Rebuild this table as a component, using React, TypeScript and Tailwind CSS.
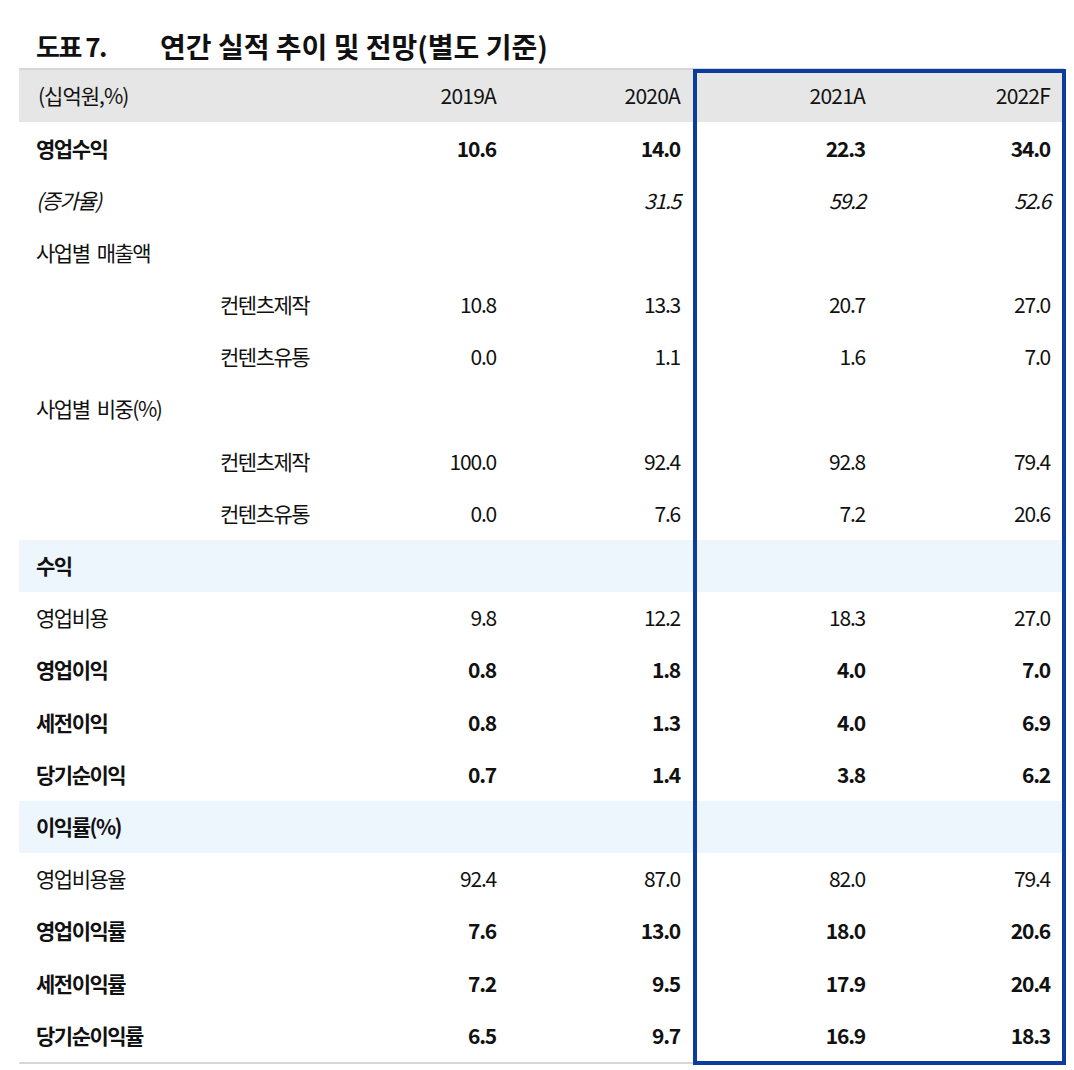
type Kind = "bold" | "normal" | "italic" | "sub" | "section";

type Row = { label: string; kind: Kind; values?: string[] };

const years = ["2019A", "2020A", "2021A", "2022F"];

const rows: Row[] = [
  { label: "영업수익", kind: "bold", values: ["10.6", "14.0", "22.3", "34.0"] },
  { label: "(증가율)", kind: "italic", values: ["", "31.5", "59.2", "52.6"] },
  { label: "사업별 매출액", kind: "normal" },
  { label: "컨텐츠제작", kind: "sub", values: ["10.8", "13.3", "20.7", "27.0"] },
  { label: "컨텐츠유통", kind: "sub", values: ["0.0", "1.1", "1.6", "7.0"] },
  { label: "사업별 비중(%)", kind: "normal" },
  { label: "컨텐츠제작", kind: "sub", values: ["100.0", "92.4", "92.8", "79.4"] },
  { label: "컨텐츠유통", kind: "sub", values: ["0.0", "7.6", "7.2", "20.6"] },
  { label: "수익", kind: "section" },
  { label: "영업비용", kind: "normal", values: ["9.8", "12.2", "18.3", "27.0"] },
  { label: "영업이익", kind: "bold", values: ["0.8", "1.8", "4.0", "7.0"] },
  { label: "세전이익", kind: "bold", values: ["0.8", "1.3", "4.0", "6.9"] },
  { label: "당기순이익", kind: "bold", values: ["0.7", "1.4", "3.8", "6.2"] },
  { label: "이익률(%)", kind: "section" },
  { label: "영업비용율", kind: "normal", values: ["92.4", "87.0", "82.0", "79.4"] },
  { label: "영업이익률", kind: "bold", values: ["7.6", "13.0", "18.0", "20.6"] },
  { label: "세전이익률", kind: "bold", values: ["7.2", "9.5", "17.9", "20.4"] },
  { label: "당기순이익률", kind: "bold", values: ["6.5", "9.7", "16.9", "18.3"] },
];

const grid = "grid grid-cols-[311px_182px_183px_184px_185px] h-[52.2px] items-center text-[21px]";

function pad(i: number) {
  return i === 1 ? "pr-[15px]" : i >= 2 ? "pr-[14px]" : "pr-4";
}

function TableRow({ row }: { row: Row }) {
  const bold = row.kind === "bold" || row.kind === "section";
  const italic = row.kind === "italic";
  return (
    <div className={`${grid} ${row.kind === "section" ? "bg-[#eef6fd]" : ""}`}>
      <div
        className={`tracking-[-1.5px] [word-spacing:4px] ${row.kind === "sub" ? "pl-[201px]" : "pl-[17px]"} ${
          bold ? "font-bold" : ""
        } ${italic ? "italic" : ""}`}
      >
        {row.label}
      </div>
      {(row.values ?? ["", "", "", ""]).map((v, i) => (
        <div
          key={i}
          className={`text-right tracking-[-1.2px] ${pad(i)} ${bold ? "font-bold" : ""} ${italic ? "italic" : ""}`}
        >
          {v}
        </div>
      ))}
    </div>
  );
}

export default function App() {
  return (
    <div className="w-[1074px] h-[1070px] bg-white text-[#111] font-['Noto_Sans_CJK_KR',sans-serif]">
      <div className="flex items-center h-[68px] pt-[24px] pl-[36px] font-bold leading-none">
        <span className="w-[124px] text-[26px] tracking-[-1.5px]">도표 7.</span>
        <span className="text-[28px]">연간 실적 추이 및 전망(별도 기준)</span>
      </div>
      <div className="relative ml-[19px] w-[1045px] border-t-2 border-b-2 border-[#d6d6d6]">
        <div className={`${grid} bg-[#e6e6e6]`}>
          <div className="pl-[19px] tracking-[-1px]">(십억원,%)</div>
          {years.map((y, i) => (
            <div key={y} className={`text-right tracking-[-0.8px] ${pad(i)}`}>
              {y}
            </div>
          ))}
        </div>
        {rows.map((r, i) => (
          <TableRow key={i} row={r} />
        ))}
        <div className="absolute left-[674px] top-[-1px] w-[373px] bottom-[-3px] border-4 border-[#0b3c9e] pointer-events-none" />
      </div>
    </div>
  );
}
